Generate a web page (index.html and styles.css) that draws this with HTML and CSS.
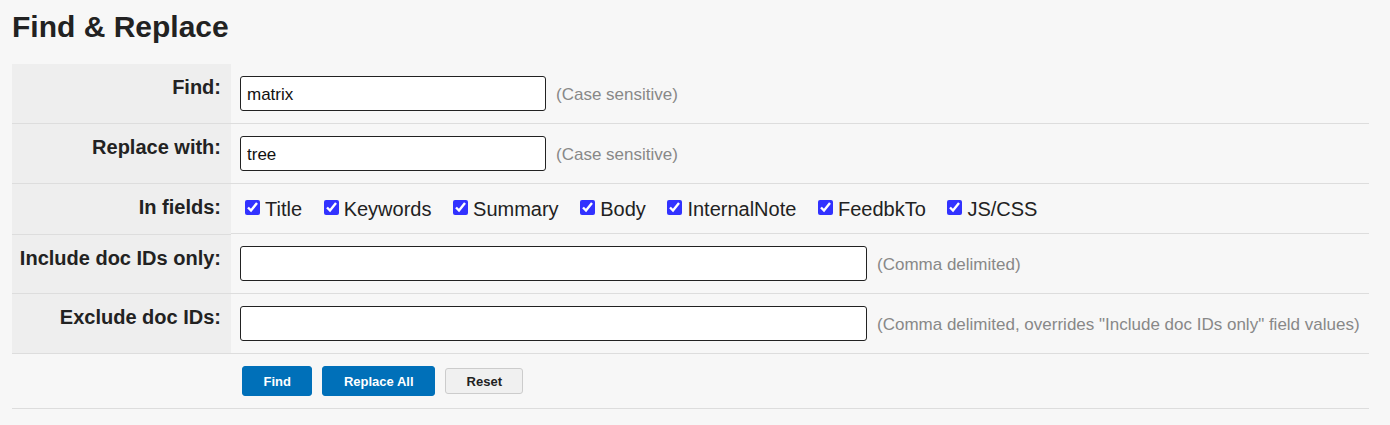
FILE: index.html
```html
<!DOCTYPE html>
<html>
<head>
<meta charset="utf-8">
<link rel="stylesheet" href="styles.css">
</head>
<body>
<h1 class="title">Find &amp; Replace</h1>
<table class="form">
  <tr>
    <th>Find:</th>
    <td><input class="txt short" type="text" value="matrix"><span class="hint">(Case sensitive)</span></td>
  </tr>
  <tr>
    <th>Replace with:</th>
    <td><input class="txt short" type="text" value="tree"><span class="hint">(Case sensitive)</span></td>
  </tr>
  <tr>
    <th>In fields:</th>
    <td class="fields">
      <label class="cb"><input type="checkbox" checked><span>Title</span></label>
      <label class="cb"><input type="checkbox" checked><span>Keywords</span></label>
      <label class="cb"><input type="checkbox" checked><span>Summary</span></label>
      <label class="cb"><input type="checkbox" checked><span>Body</span></label>
      <label class="cb"><input type="checkbox" checked><span>InternalNote</span></label>
      <label class="cb"><input type="checkbox" checked><span>FeedbkTo</span></label>
      <label class="cb"><input type="checkbox" checked><span>JS/CSS</span></label>
    </td>
  </tr>
  <tr>
    <th>Include doc IDs only:</th>
    <td><input class="txt long" type="text"><span class="hint">(Comma delimited)</span></td>
  </tr>
  <tr>
    <th>Exclude doc IDs:</th>
    <td><input class="txt long" type="text"><span class="hint">(Comma delimited, overrides "Include doc IDs only" field values)</span></td>
  </tr>
  <tr class="actions">
    <th></th>
    <td>
      <div class="btns">
        <button class="btn primary">Find</button>
        <button class="btn primary">Replace All</button>
        <button class="btn plain">Reset</button>
      </div>
    </td>
  </tr>
</table>
</body>
</html>
```
FILE: styles.css
```css
html, body {
  margin: 0;
  padding: 0;
  background: #f7f7f7;
}
body {
  padding: 0 21px 0 12px;
  font-family: "Liberation Sans", Arial, sans-serif;
  color: #222;
}
.title {
  margin: 0;
  padding-top: 9px;
  height: 64px;
  font-size: 30px;
  line-height: 35px;
  font-weight: bold;
  color: #222;
  box-sizing: border-box;
}
.form {
  width: 100%;
  border-collapse: collapse;
  border-spacing: 0;
}
.form th {
  width: 219px;
  box-sizing: border-box;
  background: #eeeeee;
  text-align: right;
  vertical-align: top;
  font-size: 20px;
  line-height: 23px;
  font-weight: bold;
  padding: 12px 10px 0 0;
  border-bottom: 1px solid #dddddd;
  color: #222;
}
.form td {
  vertical-align: top;
  padding: 12px 0 12px 9px;
  border-bottom: 1px solid #dddddd;
}
.form tr.actions th {
  background: transparent;
}
.txt {
  box-sizing: border-box;
  height: 35px;
  border: 1px solid #222;
  border-radius: 3px;
  background: #fff;
  padding: 2px 6px 0;
  font-family: "Liberation Sans", Arial, sans-serif;
  font-size: 17px;
  color: #111;
  vertical-align: baseline;
  outline: none;
}
.txt.short { width: 306px; }
.txt.long { width: 627px; }
.hint {
  margin-left: 10px;
  font-size: 17px;
  color: #888;
}
.fields {
  display: flex;
  align-items: center;
  gap: 21.6px;
  padding-left: 14px !important;
  padding-top: 13px !important;
  padding-bottom: 12px !important;
  height: 24px;
}
.cb {
  display: flex;
  align-items: center;
  gap: 5px;
  font-size: 20px;
  line-height: 24px;
  color: #222;
}
.cb input {
  margin: 0;
  width: 15px;
  height: 15px;
  accent-color: #3232ff;
  position: relative;
  top: -2px;
}
.btns {
  display: flex;
  align-items: center;
  gap: 10px;
  padding-left: 2px;
}
.btn {
  font-family: "Liberation Sans", Arial, sans-serif;
  font-size: 13px;
  font-weight: bold;
  border-radius: 3px;
  cursor: pointer;
  box-sizing: border-box;
}
.btn.primary {
  height: 30px;
  background: #0070b9;
  color: #fff;
  border: 1px solid #0070b9;
  padding: 0 20.5px;
}
.btn.plain {
  height: 26px;
  background: #f0f0f0;
  color: #222;
  border: 1px solid #cccccc;
  padding: 0 20.5px;
}
```
